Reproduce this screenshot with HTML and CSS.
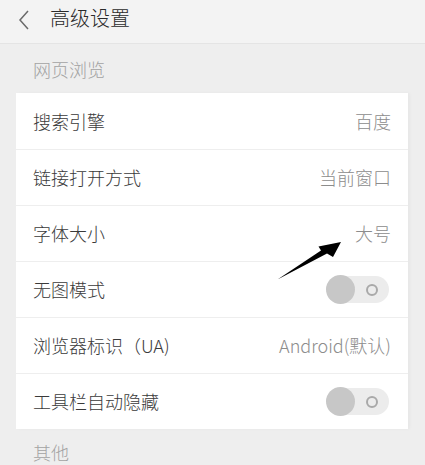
FILE: index.html
```html
<!DOCTYPE html>
<html lang="zh">
<head>
<meta charset="utf-8">
<link rel="stylesheet" href="styles.css">
</head>
<body>
<div class="page">
  <header class="topbar">
    <svg class="back" width="14" height="22" viewBox="0 0 14 22"><path d="M11 2 L3 11 L11 20" fill="none" stroke="#6a6a6a" stroke-width="1.5"/></svg>
    <span class="title">高级设置</span>
  </header>
  <div class="section-label">网页浏览</div>
  <div class="card">
    <div class="row"><span class="label">搜索引擎</span><span class="value">百度</span></div>
    <div class="row"><span class="label">链接打开方式</span><span class="value">当前窗口</span></div>
    <div class="row"><span class="label">字体大小</span><span class="value">大号</span></div>
    <div class="row"><span class="label">无图模式</span><span class="toggle"><span class="knob"></span><span class="ring"></span></span></div>
    <div class="row"><span class="label">浏览器标识（UA)</span><span class="value">Android(默认)</span></div>
    <div class="row"><span class="label">工具栏自动隐藏</span><span class="toggle"><span class="knob"></span><span class="ring"></span></span></div>
  </div>
  <div class="section-label other">其他</div>
  <svg class="arrow" width="425" height="465" viewBox="0 0 425 465">
    <path d="M277.5 279.5 L321 250.5 L318.5 246.5 L341 242 L333 257 L327 253.5 Z" fill="#000"/>
  </svg>
</div>
</body>
</html>
```
FILE: styles.css
```css
html, body {
  margin: 0;
  padding: 0;
}
body {
  background: #eeeeee;
  font-family: "Noto Sans CJK SC", "Noto Sans", sans-serif;
  font-weight: 300;
  width: 425px;
  height: 465px;
  overflow: hidden;
}
.page {
  position: relative;
  width: 425px;
  height: 465px;
}
.topbar {
  height: 43px;
  background: #f3f3f3;
  border-bottom: 1px solid #e4e4e4;
  display: flex;
  align-items: center;
  padding-left: 17px;
  box-sizing: content-box;
}
.back {
  margin-top: -4px;
}
.title {
  font-size: 20px;
  color: #2a2a2a;
  margin-left: 19px;
  margin-top: -8px;
  line-height: 1;
}
.section-label {
  font-size: 18px;
  color: #a3a3a3;
  padding-left: 33px;
  height: 49px;
  line-height: 1;
  padding-top: 16px;
  box-sizing: border-box;
}
.card {
  margin: 0 17px 0 16px;
  background: #ffffff;
  box-shadow: 2px 0 3px rgba(0,0,0,0.03);
}
.row {
  height: 56px;
  display: flex;
  align-items: center;
  justify-content: space-between;
  padding: 0 17px;
  border-top: 1px solid #eeeeee;
  box-sizing: border-box;
}
.row:first-child {
  border-top: none;
}
.label {
  font-size: 18px;
  color: #3a3a3a;
  margin-top: -1px;
}
.value {
  font-size: 18px;
  color: #8c8c8c;
  margin-top: -1px;
}
.toggle {
  position: relative;
  width: 62px;
  height: 27px;
  border-radius: 14px;
  background: #ececec;
  display: flex;
  align-items: center;
  justify-content: space-between;
  margin-right: 2px;
}
.knob {
  width: 29px;
  height: 29px;
  border-radius: 50%;
  background: #c7c7c7;
  margin-left: -1px;
}
.ring {
  width: 8px;
  height: 8px;
  border-radius: 50%;
  border: 2px solid #a9a9a9;
  margin-right: 11px;
}
.other {
  padding-top: 14px;
  height: 40px;
}
.arrow {
  position: absolute;
  left: 0;
  top: 0;
  pointer-events: none;
}
```
